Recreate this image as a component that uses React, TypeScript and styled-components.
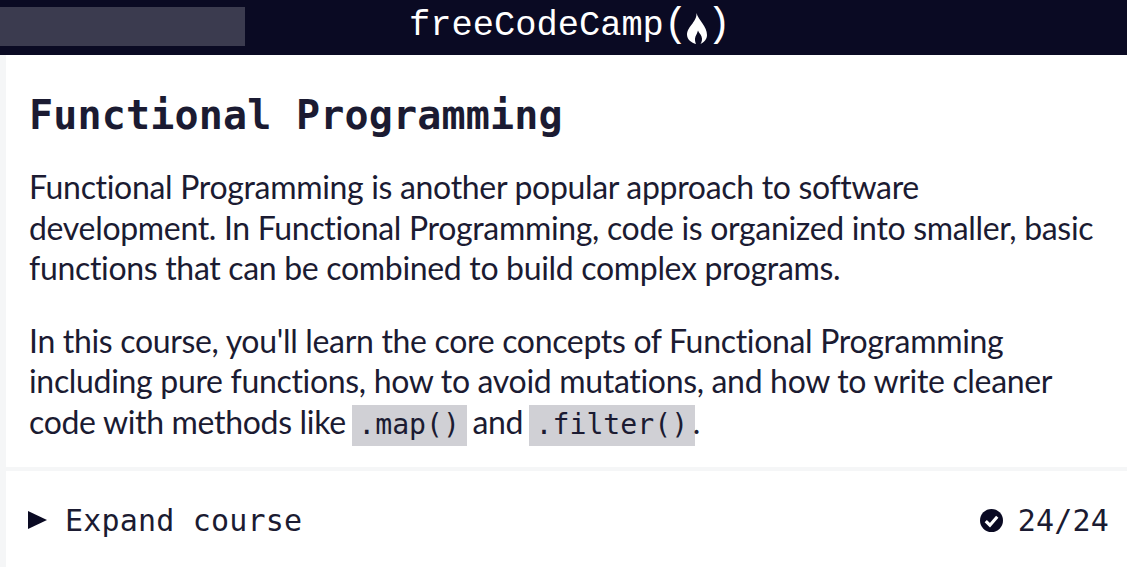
import React from "react";
import styled, { createGlobalStyle } from "styled-components";

const GlobalStyle = createGlobalStyle`
  html, body {
    margin: 0;
    padding: 0;
    background: #f5f6f7;
    overflow: hidden;
  }
  * {
    box-sizing: border-box;
  }
`;

const Page = styled.div`
  width: 1127px;
  height: 567px;
  display: flex;
  flex-direction: column;
  font-family: "Lato", sans-serif;
  color: #1b1b32;
`;

const TopBar = styled.header`
  height: 55px;
  flex-shrink: 0;
  background: #0a0a23;
  display: grid;
  grid-template-columns: 245px 1fr;
  align-items: start;
`;

const SearchBlock = styled.div`
  height: 39px;
  margin-top: 7px;
  background: #3b3b4f;
`;

const Logo = styled.div`
  display: flex;
  align-items: center;
  height: 52px;
  padding-left: 164px;
  color: #fff;
  font-family: "Liberation Mono", monospace;
  font-size: 35.4px;
  font-weight: 400;
`;

const Paren = styled.span`
  font-size: 40px;
  line-height: 1;
`;

const Flame = styled.svg`
  width: 20px;
  height: 31px;
  flex-shrink: 0;
  margin: 5px 0 0 -1px;
`;

const Content = styled.main`
  flex: 1;
  margin-left: 6px;
  display: flex;
  flex-direction: column;
`;

const Intro = styled.section`
  background: #fff;
  padding: 34px 23px 0 23px;
  height: 412px;
`;

const Title = styled.h1`
  margin: 0 0 26px;
  font-family: "DejaVu Sans Mono", monospace;
  font-size: 40px;
  line-height: 52px;
  font-weight: 700;
  letter-spacing: 0.18px;
`;

const Paragraph = styled.p`
  margin: 0 0 32px;
  font-size: 32px;
  line-height: 40.5px;
  letter-spacing: -0.32px;
`;

const Code = styled.code`
  background: #d0d0d5;
  margin: 0 -2px;
  padding: 3px 6.5px 5px;
  font-family: "DejaVu Sans Mono", monospace;
  font-size: 28.2px;
  letter-spacing: 0;
`;

const CourseToggle = styled.section`
  margin-top: 4px;
  flex: 1;
  background: #fff;
  display: flex;
  align-items: center;
  justify-content: space-between;
  padding: 2px 18px 0 22px;
  font-family: "DejaVu Sans Mono", monospace;
  font-size: 30px;
  letter-spacing: 0.18px;
`;

const ToggleLabel = styled.div`
  display: flex;
  align-items: center;
  gap: 18px;
`;

const Arrow = styled.span`
  width: 0;
  height: 0;
  border-style: solid;
  border-width: 9.5px 0 9.5px 19px;
  border-color: transparent transparent transparent #0a0a23;
`;

const Progress = styled.div`
  display: flex;
  align-items: center;
  gap: 15px;
`;

const CheckIcon = styled.svg`
  width: 23px;
  height: 23px;
`;

export default function App() {
  return (
    <Page>
      <GlobalStyle />
      <TopBar>
        <SearchBlock />
        <Logo>
          freeCodeCamp
          <Paren>(</Paren>
          <Flame viewBox="0 0 20 31">
            <path
              fill="#fff"
              d="M9.500 0C10.500 4 13 6.500 15.500 10.500C18 14 20 18 20 22C20 26 17 29.500 13.500 31C15 28.500 15.500 26 14.500 23.500C13.500 21 12 20 11 17.500C10.500 19.500 9.500 21.500 8.500 23.500C7.500 26 8 28.500 9 31C4.500 30 0 26.500 0 21.500C0 17 3 14 5.500 10.500C7.500 7.500 9.800 4.500 9.500 0z"
            />
          </Flame>
          <Paren>)</Paren>
        </Logo>
      </TopBar>
      <Content>
        <Intro>
          <Title>Functional Programming</Title>
          <Paragraph>
            Functional Programming is another popular approach to software
            development. In Functional Programming, code is organized into
            smaller, basic functions that can be combined to build complex
            programs.
          </Paragraph>
          <Paragraph>
            In this course, you'll learn the core concepts of Functional
            Programming including pure functions, how to avoid mutations, and
            how to write cleaner code with methods like <Code>.map()</Code> and{" "}
            <Code>.filter()</Code>.
          </Paragraph>
        </Intro>
        <CourseToggle>
          <ToggleLabel>
            <Arrow />
            Expand course
          </ToggleLabel>
          <Progress>
            <CheckIcon viewBox="0 0 22 22">
              <circle cx="11" cy="11" r="11" fill="#0a0a23" />
              <path
                d="M5.500 11.500l4 4 7-8"
                fill="none"
                stroke="#fff"
                strokeWidth="3"
              />
            </CheckIcon>
            24/24
          </Progress>
        </CourseToggle>
      </Content>
    </Page>
  );
}
